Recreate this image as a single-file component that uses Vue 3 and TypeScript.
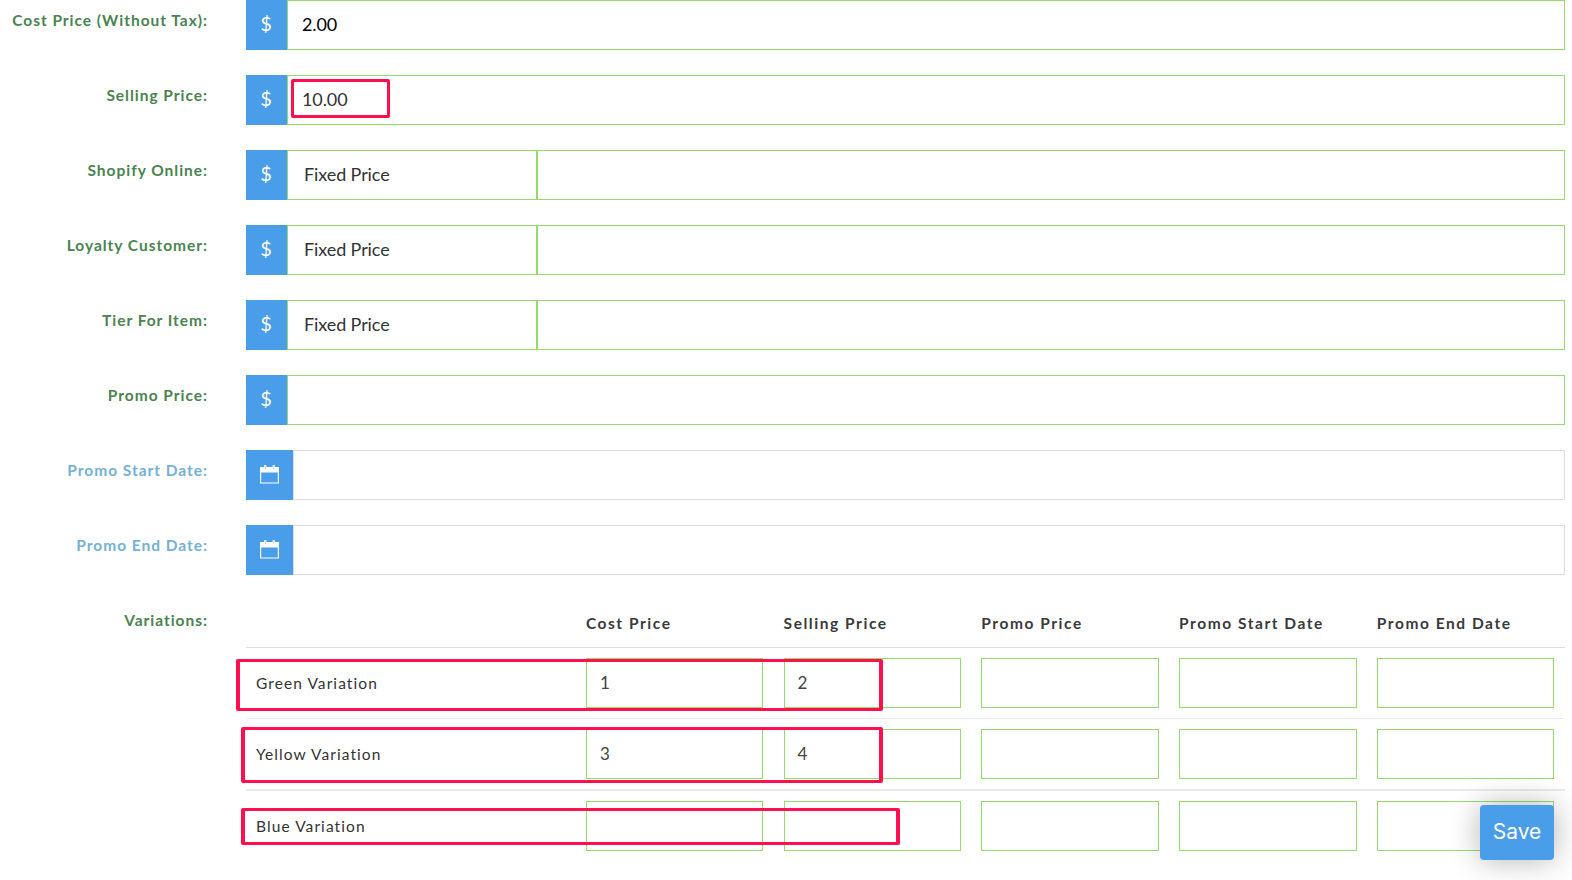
<script setup lang="ts">
interface FormRow {
  label: string
  kind: 'money' | 'tier' | 'date'
  value?: string
}
const rows: FormRow[] = [
  { label: 'Cost Price (Without Tax):', kind: 'money', value: '2.00' },
  { label: 'Selling Price:', kind: 'money', value: '10.00' },
  { label: 'Shopify Online:', kind: 'tier' },
  { label: 'Loyalty Customer:', kind: 'tier' },
  { label: 'Tier For Item:', kind: 'tier' },
  { label: 'Promo Price:', kind: 'money', value: '' },
  { label: 'Promo Start Date:', kind: 'date' },
  { label: 'Promo End Date:', kind: 'date' },
]
const heads = ['Cost Price', 'Selling Price', 'Promo Price', 'Promo Start Date', 'Promo End Date']
const variations = [
  { name: 'Green Variation', values: ['1', '2', '', '', ''] },
  { name: 'Yellow Variation', values: ['3', '4', '', '', ''] },
  { name: 'Blue Variation', values: ['', '', '', '', ''] },
]
</script>

<template>
  <div class="page">
    <form class="form" @submit.prevent>
      <div v-for="row in rows" :key="row.label" class="row">
        <label class="label" :class="{ optional: row.kind === 'date' }">{{ row.label }}</label>
        <div class="control">
          <span class="addon" :class="{ wide: row.kind === 'date' }">
            <svg v-if="row.kind === 'date'" class="cal" viewBox="0 0 19 19" width="19" height="19">
              <path fill="#fff" fill-opacity="0.75" d="M4 0h2.500v2H4zM12.500 0H15v2h-2.500z" />
              <path fill="#fff" fill-rule="evenodd" d="M0 2h19v16.500H0zM1.200 7.500v9.900h16.600V7.500zM5 2.600v1.200h.6V2.600zM13.500 2.600v1.200h.6V2.600z" />
            </svg>
            <template v-else>$</template>
          </span>
          <template v-if="row.kind === 'tier'">
            <span class="field tier">Fixed Price</span>
            <span class="field grow"></span>
          </template>
          <span v-else-if="row.kind === 'money'" class="field grow" :class="{ strong: row.label.startsWith('Cost') }">{{ row.value }}</span>
          <span v-else class="field grow grey"></span>
        </div>
      </div>

      <div class="row variations">
        <label class="label">Variations:</label>
        <div class="table">
          <div class="thead grid">
            <span></span>
            <span v-for="h in heads" :key="h" class="th">{{ h }}</span>
          </div>
          <div v-for="v in variations" :key="v.name" class="tr grid">
            <span class="name">{{ v.name }}</span>
            <span v-for="(val, i) in v.values" :key="i" class="cell">{{ val }}</span>
          </div>
        </div>
      </div>
    </form>

    <i class="mark m-sell"></i>
    <i class="mark m-green"></i>
    <i class="mark m-yellow"></i>
    <i class="mark m-blue"></i>

    <button class="save" type="button">Save</button>
  </div>
</template>

<style>
html, body { margin: 0; background: #fff; overflow: hidden; }
</style>

<style scoped>
.page {
  position: relative;
  width: 1572px;
  height: 880px;
  overflow: hidden;
  font-family: Lato, "Open Sans", sans-serif;
  color: #333;
}
.form { padding-right: 7px; }
.row {
  display: grid;
  grid-template-columns: 208px 1fr;
  column-gap: 38px;
  margin-bottom: 25px;
}
.label {
  padding-top: 10px;
  text-align: right;
  font-size: 15.5px;
  line-height: 20px;
  font-weight: 700;
  letter-spacing: 0.98px;
  color: #4a8450;
  white-space: nowrap;
}
.label.optional { color: #74b1d8; }
.control { display: flex; height: 50px; }
.addon {
  flex: none;
  width: 41px;
  display: flex;
  align-items: center;
  justify-content: center;
  background: #4a9de8;
  color: #fff;
  font-size: 20px;
  padding: 0 1px 5px 0;
  box-sizing: border-box;
}
.addon.wide { width: 47px; padding: 0 0 1px; }
.field {
  box-sizing: border-box;
  display: flex;
  align-items: center;
  height: 50px;
  padding-bottom: 2px;
  border: 1px solid #94dc6a;
  font-size: 18px;
  letter-spacing: -0.1px;
  color: #333;
}
.field.grow { flex: 1; padding-left: 14px; }
.field.strong { color: #000; }
.field.tier { width: 251px; padding-left: 16px; border-right-width: 2px; }
.tier + .field { border-left: 0; }
.field.grey { border-color: #dcdcea; }
.grid {
  display: grid;
  grid-template-columns: 1fr repeat(5, 177.6px);
  column-gap: 20.15px;
  padding: 0 10.6px 0 10px;
  align-items: center;
}
.thead { height: 47px; border-bottom: 1px solid #dcdcea; }
.th {
  padding-bottom: 2px;
  font-size: 15.5px;
  font-weight: 700;
  letter-spacing: 1.55px;
  color: #3a3a3a;
  white-space: nowrap;
}
.tr { padding-top: 10px; padding-bottom: 10px; border-bottom: 1px solid #e9ebf0; }
.tr:nth-child(3) { border-bottom-width: 2px; }
.tr:last-child { border-bottom: 0; }
.name { font-size: 15.5px; letter-spacing: 1.08px; color: #333; }
.cell {
  box-sizing: border-box;
  display: flex;
  align-items: center;
  height: 50px;
  padding-left: 13px;
  padding-bottom: 2px;
  border: 1px solid #94dc6a;
  font-size: 17px;
  color: #444;
}
.mark {
  position: absolute;
  box-sizing: border-box;
  border: 3px solid #ff0f50;
  border-left-width: 4px;
  border-right-width: 4px;
  border-radius: 2px;
  pointer-events: none;
}
.m-sell { left: 291px; top: 79px; width: 99px; height: 39px; border-width: 3px; }
.m-green { left: 236px; top: 659px; width: 647px; height: 52px; }
.m-yellow { left: 241px; top: 727px; width: 642px; height: 56px; }
.m-blue { left: 241px; top: 808px; width: 659px; height: 37px; }
.save {
  position: absolute;
  left: 1480px;
  top: 805px;
  width: 74px;
  height: 55px;
  padding: 0 0 2px;
  border: 0;
  border-radius: 4px;
  background: #4a9de8;
  color: #fff;
  font-family: Inter, sans-serif;
  font-size: 21px;
  box-shadow: 0 0 30px rgba(0, 0, 0, 0.3);
}
</style>
